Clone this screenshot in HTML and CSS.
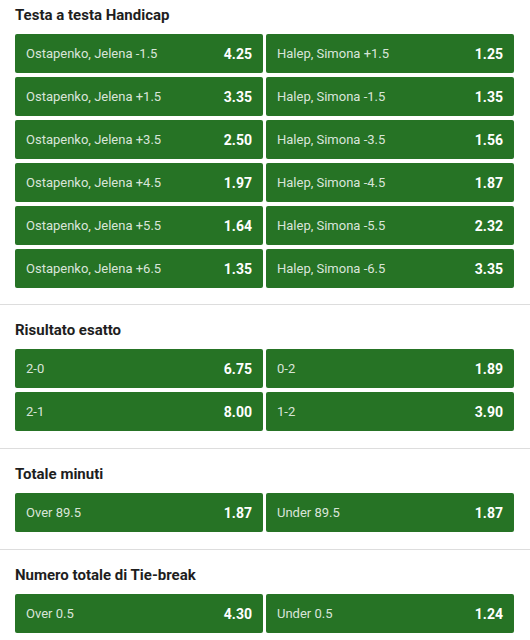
FILE: index.html
```html
<!DOCTYPE html>
<html lang="it">
<head>
<meta charset="utf-8">
<link rel="stylesheet" href="styles.css">
</head>
<body>
<section class="market first">
  <h2 class="title">Testa a testa Handicap</h2>
  <div class="grid">
    <div class="odd"><span class="name">Ostapenko, Jelena -1.5</span><span class="price">4.25</span></div>
    <div class="odd"><span class="name">Halep, Simona +1.5</span><span class="price">1.25</span></div>
    <div class="odd"><span class="name">Ostapenko, Jelena +1.5</span><span class="price">3.35</span></div>
    <div class="odd"><span class="name">Halep, Simona -1.5</span><span class="price">1.35</span></div>
    <div class="odd"><span class="name">Ostapenko, Jelena +3.5</span><span class="price">2.50</span></div>
    <div class="odd"><span class="name">Halep, Simona -3.5</span><span class="price">1.56</span></div>
    <div class="odd"><span class="name">Ostapenko, Jelena +4.5</span><span class="price">1.97</span></div>
    <div class="odd"><span class="name">Halep, Simona -4.5</span><span class="price">1.87</span></div>
    <div class="odd"><span class="name">Ostapenko, Jelena +5.5</span><span class="price">1.64</span></div>
    <div class="odd"><span class="name">Halep, Simona -5.5</span><span class="price">2.32</span></div>
    <div class="odd"><span class="name">Ostapenko, Jelena +6.5</span><span class="price">1.35</span></div>
    <div class="odd"><span class="name">Halep, Simona -6.5</span><span class="price">3.35</span></div>
  </div>
</section>
<section class="market">
  <h2 class="title">Risultato esatto</h2>
  <div class="grid">
    <div class="odd"><span class="name">2-0</span><span class="price">6.75</span></div>
    <div class="odd"><span class="name">0-2</span><span class="price">1.89</span></div>
    <div class="odd"><span class="name">2-1</span><span class="price">8.00</span></div>
    <div class="odd"><span class="name">1-2</span><span class="price">3.90</span></div>
  </div>
</section>
<section class="market">
  <h2 class="title">Totale minuti</h2>
  <div class="grid">
    <div class="odd"><span class="name">Over 89.5</span><span class="price">1.87</span></div>
    <div class="odd"><span class="name">Under 89.5</span><span class="price">1.87</span></div>
  </div>
</section>
<section class="market">
  <h2 class="title">Numero totale di Tie-break</h2>
  <div class="grid">
    <div class="odd"><span class="name">Over 0.5</span><span class="price">4.30</span></div>
    <div class="odd"><span class="name">Under 0.5</span><span class="price">1.24</span></div>
  </div>
</section>
</body>
</html>
```
FILE: styles.css
```css
html, body {
  margin: 0;
  padding: 0;
  background: #ffffff;
  font-family: Roboto, "Liberation Sans", Arial, sans-serif;
}

.market {
  padding: 10px 16px 17px 15px;
  border-bottom: 1px solid #dddddd;
}

.market.first {
  padding-top: 0;
  padding-bottom: 16px;
}

.title {
  margin: 0;
  height: 34px;
  display: flex;
  align-items: center;
  font-size: 15px;
  font-weight: 700;
  color: #1e1e1e;
  padding-bottom: 5px;
  box-sizing: border-box;
}

.grid {
  display: grid;
  grid-template-columns: 248px 248px;
  column-gap: 3px;
  row-gap: 4px;
}

.odd {
  height: 39px;
  background: #267325;
  border-radius: 2px;
  display: flex;
  align-items: center;
  justify-content: space-between;
  padding: 0 11px;
}

.name {
  font-size: 13px;
  color: rgba(255, 255, 255, 0.84);
}

.price {
  font-size: 14px;
  font-weight: 700;
  color: #ffffff;
}
```
